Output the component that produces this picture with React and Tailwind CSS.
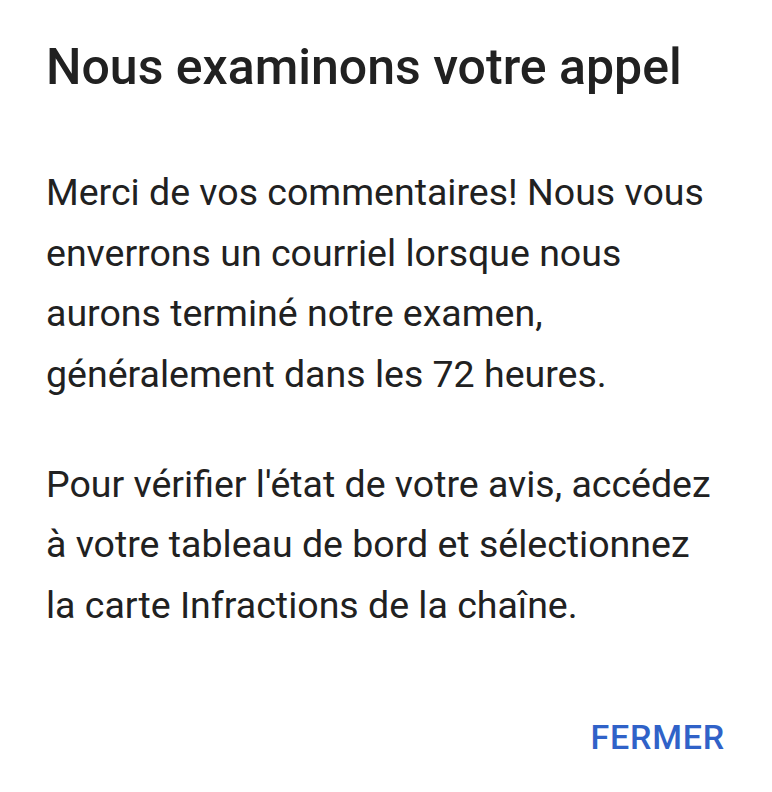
export default function App() {
  return (
    <div className="w-[772px] h-[792px] bg-white flex flex-col pl-[46px] pr-[44px]" style={{ fontFamily: "Roboto, 'Liberation Sans', sans-serif" }}>
      <h1 className="mt-[37px] text-[50px] leading-[60px] font-medium text-[#212121]">Nous examinons votre appel</h1>
      <div className="mt-[65px] text-[37.5px] leading-[60.5px] text-[#212121]">
        <p>Merci de vos commentaires! Nous vous enverrons un courriel lorsque nous aurons terminé notre examen, généralement dans les 72 heures.</p>
        <p className="mt-[49.5px]">Pour vérifier l'état de votre avis, accédez à votre tableau de bord et sélectionnez la carte Infractions de la chaîne.</p>
      </div>
      <div className="flex justify-end mt-auto mb-[35px] mr-[3px]">
        <button className="text-[34px] font-medium text-[#3062c8] leading-[40px] tracking-[0.8px]">FERMER</button>
      </div>
    </div>
  );
}
